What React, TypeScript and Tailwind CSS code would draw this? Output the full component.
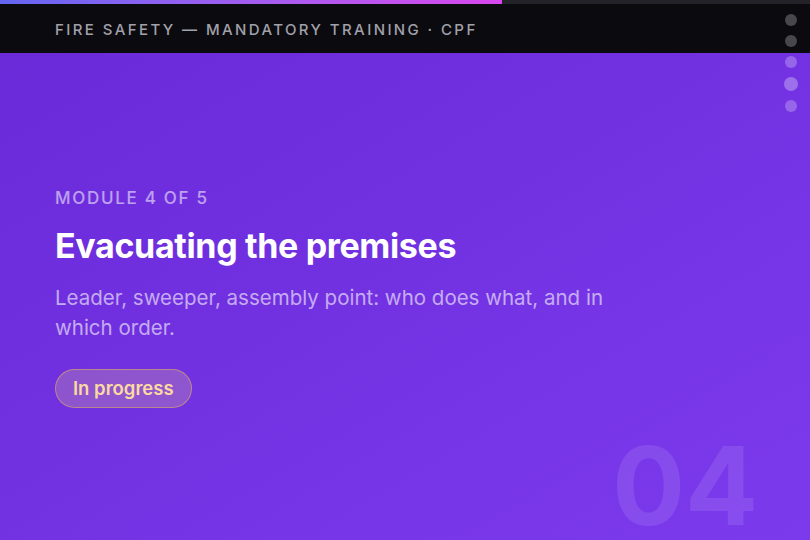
export default function App() {
  const dots = [0, 1, 2, 3, 4];
  const active = 3;

  return (
    <div
      className="relative flex h-[540px] w-[810px] flex-col overflow-hidden bg-[#0b0a0f]"
      style={{ fontFamily: "Inter, 'Noto Sans', sans-serif" }}
    >
      {/* progress */}
      <div className="h-1 w-full bg-[#232228]">
        <div className="h-full w-[62%] bg-gradient-to-r from-[#6366f1] to-[#d946ef]" />
      </div>

      <header className="flex h-[49px] items-center px-[55px] pt-[4px]">
        <p className="text-[15px] font-medium uppercase tracking-[0.16em] text-[#a1a1aa]">
          Fire Safety — Mandatory Training · CPF
        </p>
      </header>

      <main className="relative flex flex-1 flex-col justify-center bg-gradient-to-br from-[#6a2ad8] to-[#7c3aed] px-[55px] pt-[2px]">
        <p className="text-[17px] font-medium uppercase leading-[22px] tracking-[0.1em] text-white/55">
          Module 4 of 5
        </p>
        <h1 className="mt-[16px] text-[34px] font-bold leading-tight tracking-[-0.01em] text-white">
          Evacuating the premises
        </h1>
        <p className="mt-[16px] max-w-[570px] text-[20.5px] leading-[30px] text-white/60">
          Leader, sweeper, assembly point: who does what, and in which order.
        </p>
        <div className="mt-[26px]">
          <span className="inline-flex h-[39px] items-center rounded-full border border-amber-300/40 bg-amber-200/20 px-[17px] text-[18.5px] font-semibold text-[#fcd9a0]">
            In progress
          </span>
        </div>

        <span className="pointer-events-none absolute bottom-[14px] right-[52px] h-[80px] select-none overflow-visible text-[108px] font-bold leading-[80px] text-white/10">
          04
        </span>
      </main>

      {/* section dots */}
      <nav className="absolute right-[12px] top-[14px] flex flex-col items-center gap-[9px]">
        {dots.map((d) => (
          <span
            key={d}
            className={
              d === active
                ? "h-[14px] w-[14px] rounded-full bg-white/30"
                : "h-[12px] w-[12px] rounded-full bg-white/25"
            }
          />
        ))}
      </nav>
    </div>
  );
}
